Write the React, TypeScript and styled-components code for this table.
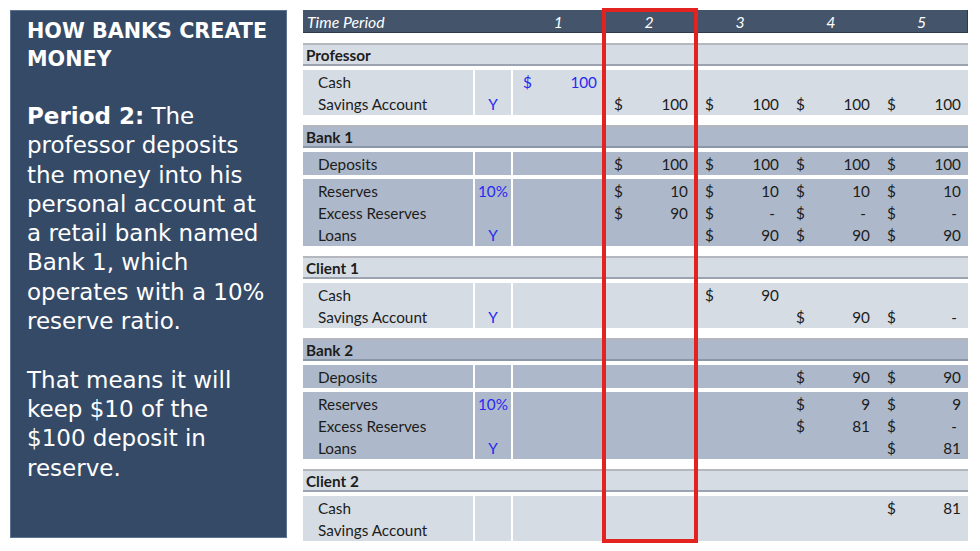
import React from 'react'
import styled, { createGlobalStyle } from 'styled-components'

const GlobalStyle = createGlobalStyle`
  html, body {
    margin: 0;
    padding: 0;
    background: #fff;
  }
`

const LIGHT = '#d6dce4'
const DARK = '#adb9ca'

type Tone = 'light' | 'dark'
type Val = number | '-' | null
type Row = { label: string; flag?: string; vals: Val[]; blue?: boolean[] }
type Group = { title: string; tone: Tone; blocks: Row[][] }

const groups: Group[] = [
  {
    title: 'Professor',
    tone: 'light',
    blocks: [
      [
        { label: 'Cash', vals: [100, null, null, null, null], blue: [true] },
        { label: 'Savings Account', flag: 'Y', vals: [null, 100, 100, 100, 100] },
      ],
    ],
  },
  {
    title: 'Bank 1',
    tone: 'dark',
    blocks: [
      [{ label: 'Deposits', vals: [null, 100, 100, 100, 100] }],
      [
        { label: 'Reserves', flag: '10%', vals: [null, 10, 10, 10, 10] },
        { label: 'Excess Reserves', vals: [null, 90, '-', '-', '-'] },
        { label: 'Loans', flag: 'Y', vals: [null, null, 90, 90, 90] },
      ],
    ],
  },
  {
    title: 'Client 1',
    tone: 'light',
    blocks: [
      [
        { label: 'Cash', vals: [null, null, 90, null, null] },
        { label: 'Savings Account', flag: 'Y', vals: [null, null, null, 90, '-'] },
      ],
    ],
  },
  {
    title: 'Bank 2',
    tone: 'dark',
    blocks: [
      [{ label: 'Deposits', vals: [null, null, null, 90, 90] }],
      [
        { label: 'Reserves', flag: '10%', vals: [null, null, null, 9, 9] },
        { label: 'Excess Reserves', vals: [null, null, null, 81, '-'] },
        { label: 'Loans', flag: 'Y', vals: [null, null, null, null, 81] },
      ],
    ],
  },
  {
    title: 'Client 2',
    tone: 'light',
    blocks: [
      [
        { label: 'Cash', vals: [null, null, null, null, 81] },
        { label: 'Savings Account', vals: [null, null, null, null, null] },
      ],
    ],
  },
]

const Page = styled.div`
  display: flex;
  gap: 16px;
  padding: 10px 12px 0 10px;
  width: 980px;
  height: 551px;
  box-sizing: border-box;
`

const Panel = styled.div`
  width: 277px;
  height: 528px;
  box-sizing: border-box;
  background: #354a67;
  border: 1px solid #5d7190;
  padding: 6px 6px 0 16px;
  color: #fff;
  font-family: 'DejaVu Sans', sans-serif;
`

const Title = styled.h1`
  margin: 0;
  font-size: 20.7px;
  line-height: 28px;
  font-weight: 700;
`

const Body = styled.div`
  margin-top: 29px;
  font-size: 23px;
  line-height: 29.3px;
  white-space: nowrap;
`

const Line = styled.div`
  height: 29.3px;
`

const TableWrap = styled.div`
  position: relative;
  width: 665px;
  font-family: Lato, 'Liberation Sans', sans-serif;
  font-size: 15.3px;
  color: #1c1c1c;
`

const RowGrid = styled.div`
  display: grid;
  grid-template-columns: 170px 36px 1fr;
  column-gap: 2px;
`

const Periods = styled.div`
  display: grid;
  grid-template-columns: repeat(5, 1fr);
`

const HeaderBar = styled.div`
  height: 23px;
  background: #44546a;
  border-bottom: 1px solid #2f3b4b;
  border-right: 1px solid #2f3b4b;
  color: #fff;
  font-style: italic;
  font-size: 15.8px;
  display: grid;
  grid-template-columns: 210px 1fr;
  align-items: center;
  box-sizing: border-box;
`

const HeaderLabel = styled.div`
  padding-left: 4px;
`

const HeaderNum = styled.div`
  text-align: center;
`

const GroupBox = styled.div`
  margin-top: 10px;
  display: flex;
  flex-direction: column;
  gap: 4px;
`

const SectionHead = styled.div<{ $tone: Tone }>`
  height: 23px;
  box-sizing: border-box;
  background: ${(p) => (p.$tone === 'light' ? LIGHT : DARK)};
  border-top: 2px solid #b4b8be;
  border-bottom: 2px solid ${(p) => (p.$tone === 'light' ? '#9aa3af' : '#8a97a8')};
  font-weight: 700;
  padding-left: 3px;
  display: flex;
  align-items: center;
`

const Block = styled.div<{ $tone: Tone }>`
  padding-top: 1px;
  background: linear-gradient(
    to right,
    ${(p) => (p.$tone === 'light' ? LIGHT : DARK)} 170px,
    transparent 170px,
    transparent 172px,
    ${(p) => (p.$tone === 'light' ? LIGHT : DARK)} 172px,
    ${(p) => (p.$tone === 'light' ? LIGHT : DARK)} 208px,
    transparent 208px,
    transparent 210px,
    ${(p) => (p.$tone === 'light' ? LIGHT : DARK)} 210px
  );
`

const Cell = styled.div<{ $tone: Tone }>`
  height: 22px;
  background: ${(p) => (p.$tone === 'light' ? LIGHT : DARK)};
  display: flex;
  align-items: center;
`

const Label = styled(Cell)`
  padding-left: 15px;
`

const Flag = styled(Cell)`
  justify-content: center;
  color: #2828f0;
`

const ValueArea = styled.div<{ $tone: Tone }>`
  height: 22px;
  background: ${(p) => (p.$tone === 'light' ? LIGHT : DARK)};
  display: grid;
  grid-template-columns: repeat(5, 1fr);
  align-items: center;
`

const Amount = styled.div<{ $blue?: boolean }>`
  display: flex;
  justify-content: space-between;
  align-items: center;
  padding: 0 7px 0 10px;
  color: ${(p) => (p.$blue ? '#2828f0' : 'inherit')};
`

const Dash = styled.span`
  padding-right: 4px;
`

const Highlight = styled.div`
  position: absolute;
  left: 299px;
  top: -2px;
  width: 96px;
  height: 535px;
  box-sizing: border-box;
  border: 4px solid #e3231f;
  pointer-events: none;
`

const DataRow = ({ row, tone }: { row: Row; tone: Tone }) => (
  <RowGrid>
    <Label $tone={tone}>{row.label}</Label>
    <Flag $tone={tone}>{row.flag}</Flag>
    <ValueArea $tone={tone}>
      {row.vals.map((v, i) => (
        <Amount key={i} $blue={row.blue?.[i]}>
          {v !== null && (
            <>
              <span>$</span>
              {v === '-' ? <Dash>-</Dash> : <span>{v}</span>}
            </>
          )}
        </Amount>
      ))}
    </ValueArea>
  </RowGrid>
)

const bodyLines: React.ReactNode[] = [
  <><b>Period 2:</b> The</>,
  'professor deposits',
  'the money into his',
  'personal account at',
  'a retail bank named',
  'Bank 1, which',
  'operates with a 10%',
  'reserve ratio.',
  '',
  'That means it will',
  'keep $10 of the',
  '$100 deposit in',
  'reserve.',
]

const App = () => {
  return (
    <Page>
      <GlobalStyle />
      <Panel>
        <Title>HOW BANKS CREATE MONEY</Title>
        <Body>
          {bodyLines.map((l, i) => (
            <Line key={i}>{l}</Line>
          ))}
        </Body>
      </Panel>
      <TableWrap>
        <HeaderBar>
          <HeaderLabel>Time Period</HeaderLabel>
          <Periods>
            {[1, 2, 3, 4, 5].map((n) => (
              <HeaderNum key={n}>{n}</HeaderNum>
            ))}
          </Periods>
        </HeaderBar>
        {groups.map((g) => (
          <GroupBox key={g.title}>
            <SectionHead $tone={g.tone}>{g.title}</SectionHead>
            {g.blocks.map((rows, bi) => (
              <Block key={bi} $tone={g.tone}>
                {rows.map((r) => (
                  <DataRow key={r.label} row={r} tone={g.tone} />
                ))}
              </Block>
            ))}
          </GroupBox>
        ))}
        <Highlight />
      </TableWrap>
    </Page>
  )
}

export default App
